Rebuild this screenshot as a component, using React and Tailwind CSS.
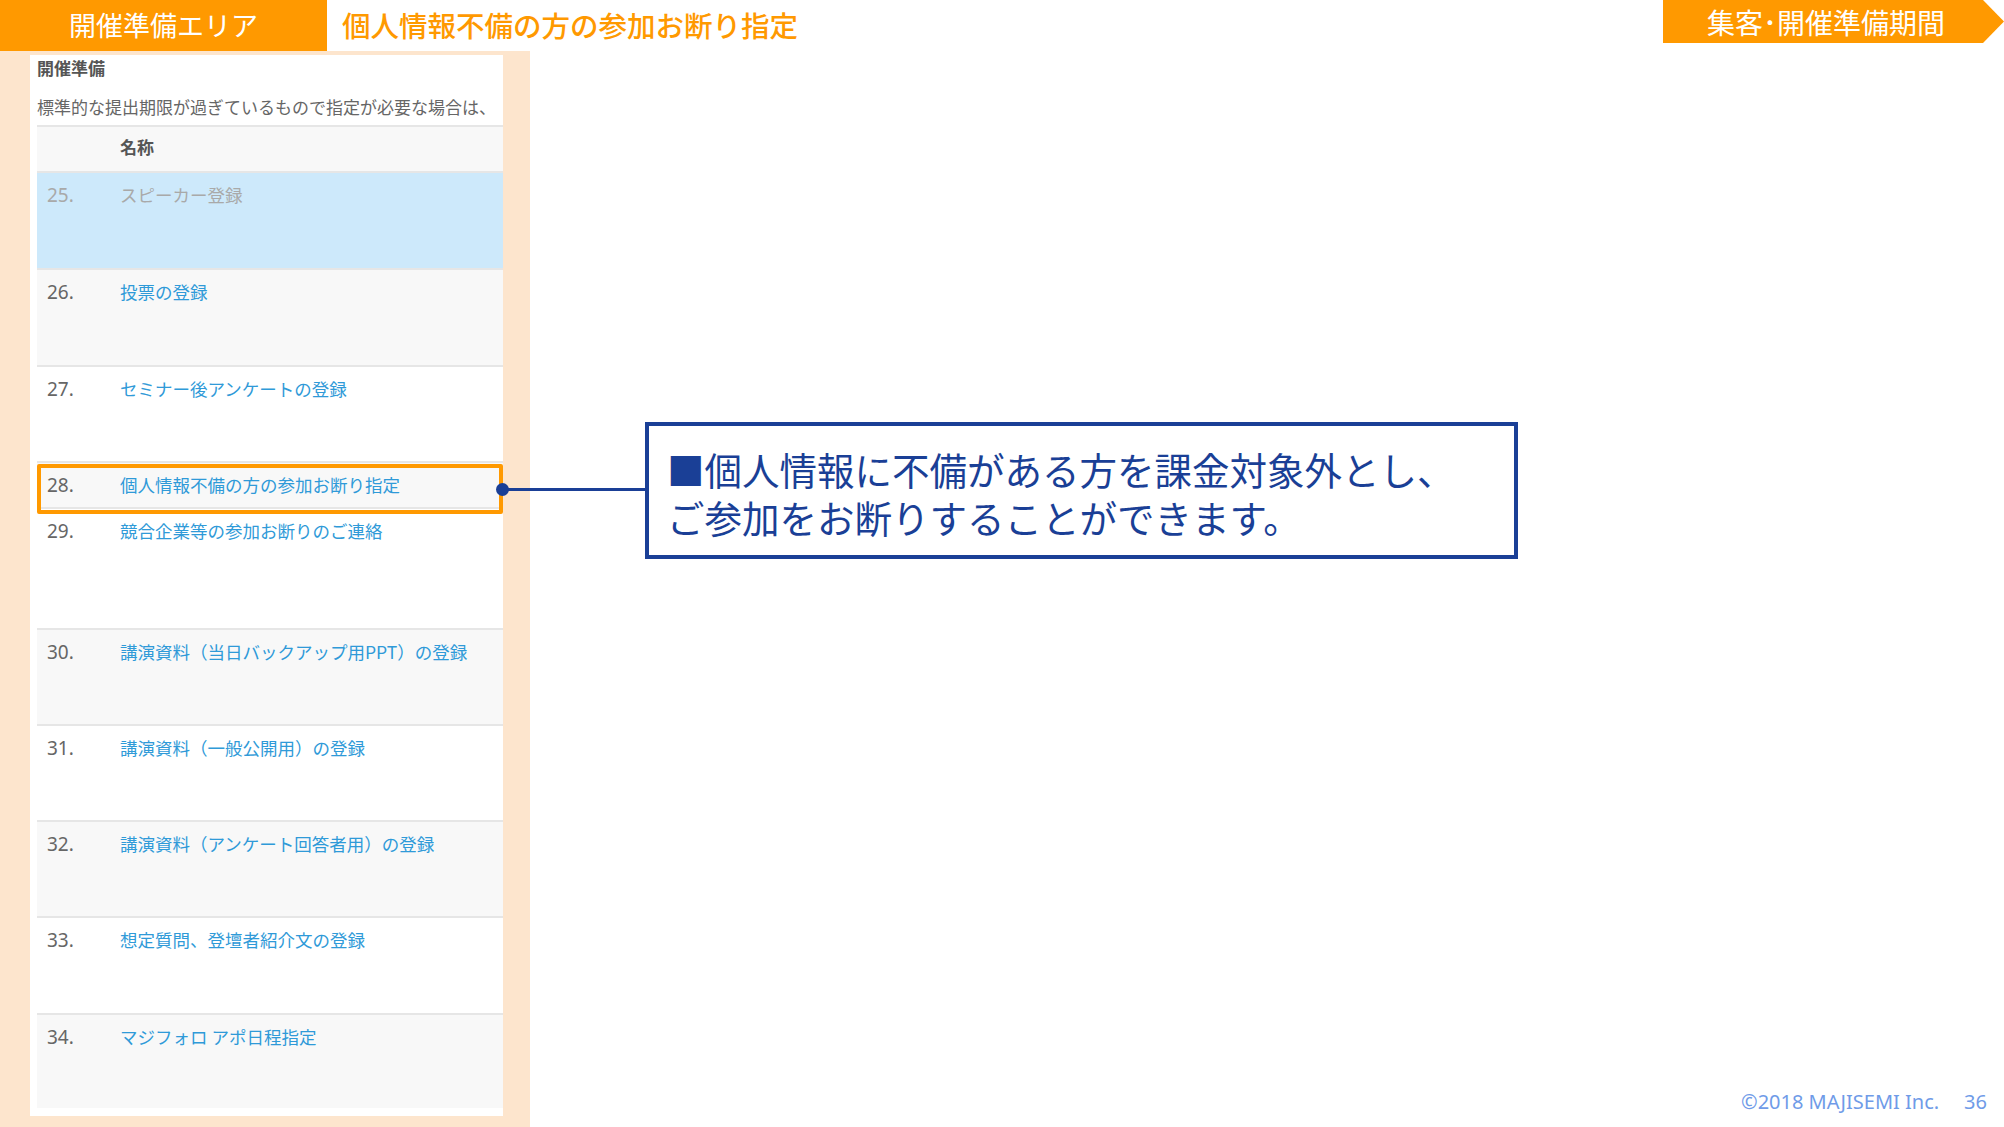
import React from 'react';

const rows = [
  { no: '25.', name: 'スピーカー登録', h: 'h-[97px]', bg: 'bg-[#cde9fb]', muted: true },
  { no: '26.', name: '投票の登録', h: 'h-[97px]', bg: 'bg-[#f8f8f8]' },
  { no: '27.', name: 'セミナー後アンケートの登録', h: 'h-[96px]', bg: 'bg-white' },
  { no: '28.', name: '個人情報不備の方の参加お断り指定', h: 'h-[46px]', bg: 'bg-[#f8f8f8]', marked: true },
  { no: '29.', name: '競合企業等の参加お断りのご連絡', h: 'h-[121px]', bg: 'bg-white' },
  { no: '30.', name: '講演資料（当日バックアップ用PPT）の登録', h: 'h-[96px]', bg: 'bg-[#f8f8f8]' },
  { no: '31.', name: '講演資料（一般公開用）の登録', h: 'h-[96px]', bg: 'bg-white' },
  { no: '32.', name: '講演資料（アンケート回答者用）の登録', h: 'h-[96px]', bg: 'bg-[#f8f8f8]' },
  { no: '33.', name: '想定質問、登壇者紹介文の登録', h: 'h-[97px]', bg: 'bg-white' },
  { no: '34.', name: 'マジフォロ アポ日程指定', h: 'h-[95px]', bg: 'bg-[#f8f8f8]' },
];

function Row({ row }) {
  return (
    <div className={`relative flex border-t-2 border-[#e6e6e6] pt-[10px] ${row.h} ${row.bg}`}>
      <span className={`w-[83px] pl-[10px] font-['Noto_Sans',sans-serif] text-[19px] leading-[24px] ${row.muted ? 'text-[#a9a9a9]' : 'text-[#666666]'}`}>
        {row.no}
      </span>
      <span className={`text-[17.5px] leading-[24px] whitespace-nowrap ${row.muted ? 'text-[#a9a9a9]' : 'text-[#2f9ad8]'}`}>
        {row.name}
      </span>
      {row.marked && (
        <div className="absolute left-0 right-0 top-[1px] h-[50px] border-4 border-[#ff9900] rounded-[2px] z-10" />
      )}
    </div>
  );
}

export default function App() {
  return (
    <div className="relative w-[2004px] h-[1127px] overflow-hidden bg-white font-['Noto_Sans_CJK_JP','Noto_Sans',sans-serif]">
      <header className="flex h-[51px]">
        <div className="flex w-[327px] items-center justify-center bg-[#ff9900] text-[27px] text-white">
          開催準備エリア
        </div>
        <div className="flex items-center pl-[15px] text-[28.5px] font-medium text-[#ff9900]">
          個人情報不備の方の参加お断り指定
        </div>
        <div className="ml-auto flex h-[43px]">
          <div className="flex w-[320px] items-center justify-center bg-[#ff9900] pl-[6px] text-[28px] text-white">
            集客･開催準備期間
          </div>
          <svg width="21" height="43" viewBox="0 0 21 43" className="block">
            <polygon points="0,0 21,21.5 0,43" fill="#ff9900" />
          </svg>
        </div>
      </header>

      <div className="flex">
        <aside className="h-[1076px] w-[530px] bg-[#fde5cd] pl-[30px] pt-[4px]">
          <div className="h-[1061px] w-[473px] overflow-hidden bg-white pl-[7px] pt-[1px]">
            <div className="text-[17px] font-bold leading-[24px] text-[#555555]">開催準備</div>
            <div className="mt-[15px] whitespace-nowrap text-[17px] leading-[24px] text-[#666666]">
              標準的な提出期限が過ぎているもので指定が必要な場合は、
            </div>
            <div className="mt-[6px] flex h-[46px] border-t-2 border-[#e6e6e6] bg-[#f8f8f8] pt-[8px]">
              <span className="w-[83px]" />
              <span className="text-[17px] font-bold leading-[24px] text-[#555555]">名称</span>
            </div>
            {rows.map((row) => (
              <Row key={row.no} row={row} />
            ))}
          </div>
        </aside>
      </div>

      {/* connector + callout */}
      <div className="absolute left-[502px] top-[488px] h-[3px] w-[145px] bg-[#1a3f96]" />
      <div className="absolute left-[496px] top-[483px] z-20 h-[13px] w-[13px] rounded-full bg-[#1a3f96]" />
      <div className="absolute left-[645px] top-[422px] h-[137px] w-[873px] border-4 border-[#1a3f96] bg-white pl-[18px] pt-[19px] text-[37.5px] leading-[48px] text-[#1a3f96] whitespace-nowrap">
        ■個人情報に不備がある方を課金対象外とし、
        <br />
        ご参加をお断りすることができます。
      </div>

      <footer className="absolute bottom-[13px] right-[17px] flex gap-[25px] font-['Noto_Sans',sans-serif] text-[20px] leading-[24px] text-[#6f9be8]">
        <span>©2018 MAJISEMI Inc.</span>
        <span>36</span>
      </footer>
    </div>
  );
}
